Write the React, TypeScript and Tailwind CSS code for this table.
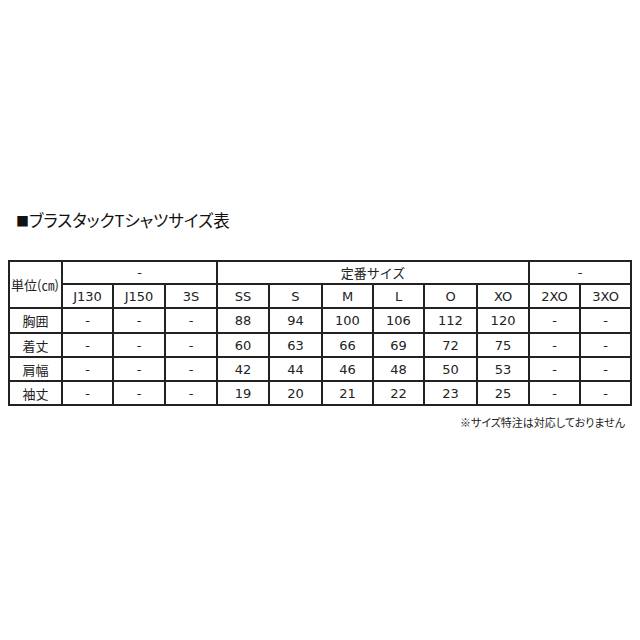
import React from 'react';

const sizes = ['J130', 'J150', '3S', 'SS', 'S', 'M', 'L', 'O', 'XO', '2XO', '3XO'];
const colWidths = [53, 51, 52, 52, 52, 53, 51, 51, 53, 52, 51, 51];

const rows: { label: string; values: string[]; h: string }[] = [
    { label: '胸囲', values: ['-', '-', '-', '88', '94', '100', '106', '112', '120', '-', '-'], h: 'h-[25px]' },
    { label: '着丈', values: ['-', '-', '-', '60', '63', '66', '69', '72', '75', '-', '-'], h: 'h-[24px]' },
    { label: '肩幅', values: ['-', '-', '-', '42', '44', '46', '48', '50', '53', '-', '-'], h: 'h-[24px]' },
    { label: '袖丈', values: ['-', '-', '-', '19', '20', '21', '22', '23', '25', '-', '-'], h: 'h-[24px]' },
];

const cell = 'border-2 border-[#222] p-0 text-center align-middle';

const App: React.FC = () => {
    return (
        <div className="min-h-screen bg-white text-[#222] font-['DejaVu_Sans','Noto_Sans_CJK_JP',sans-serif]">
            <div className="flex flex-col pt-[207px] pl-[8px] pr-[10px]">
                <h1 className="pl-[8px] text-[16.5px] leading-[26px] font-normal text-[#111] font-['Noto_Sans_CJK_JP',sans-serif] [font-feature-settings:'palt']">
                    <span className="text-[13px] align-[1px]">■</span>ブラスタックTシャツサイズ表
                </h1>

                <table className="mt-[26px] w-[622px] table-fixed border-collapse text-[13px] leading-none">
                    <colgroup>
                        {colWidths.map((w, i) => (
                            <col key={i} style={{ width: w }} />
                        ))}
                    </colgroup>
                    <thead>
                        <tr className="h-[23px]">
                            <th rowSpan={2} className="border-2 border-[#222] p-0 pl-[1px] text-left align-middle font-normal font-['Noto_Sans_CJK_JP',sans-serif]">
                                単位(㎝)
                            </th>
                            <th colSpan={3} className={`${cell} font-normal`}>-</th>
                            <th colSpan={6} className={`${cell} font-normal font-['Noto_Sans_CJK_JP',sans-serif]`}>定番サイズ</th>
                            <th colSpan={2} className={`${cell} font-normal`}>-</th>
                        </tr>
                        <tr className="h-[24px]">
                            {sizes.map((s) => (
                                <th key={s} className={`${cell} font-normal`}>
                                    {s}
                                </th>
                            ))}
                        </tr>
                    </thead>
                    <tbody>
                        {rows.map((r) => (
                            <tr key={r.label} className={r.h}>
                                <td className={`${cell} font-['Noto_Sans_CJK_JP',sans-serif]`}>{r.label}</td>
                                {r.values.map((v, i) => (
                                    <td key={i} className={cell}>
                                        {v}
                                    </td>
                                ))}
                            </tr>
                        ))}
                    </tbody>
                </table>

                <p className="mt-[8px] pr-[5px] text-right text-[11px] leading-[16px] text-[#222] font-['Noto_Sans_CJK_JP',sans-serif] [font-feature-settings:'palt']">
                    ※サイズ特注は対応しておりません
                </p>
            </div>
        </div>
    );
};

export default App;
